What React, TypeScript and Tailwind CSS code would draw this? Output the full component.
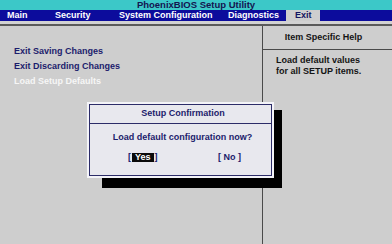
import React from "react";

const F = { fontFamily: '"Liberation Sans", Arial, sans-serif' };

export default function App() {
  return (
    <div
      className="relative w-[392px] h-[244px] overflow-hidden bg-[#cecece] font-bold text-[9px]"
      style={F}
    >
      {/* Title bar */}
      <div className="h-[10px] bg-[#3cc8c8] text-[#141450] text-center leading-[9px] text-[9.5px]">
        PhoenixBIOS Setup Utility
      </div>
      {/* Menu bar */}
      <div className="h-[11px] bg-[#0c0c9c] flex pl-[7px] text-white text-[9px] leading-[11px]">
        <div className="w-[48px]">Main</div>
        <div className="w-[64px]">Security</div>
        <div className="w-[109px]">System Configuration</div>
        <div className="w-[58px]">Diagnostics</div>
        <div className="w-[34px] pl-[9px] bg-[#cecece] text-[#141460]">Exit</div>
      </div>
      {/* Gap under menu */}
      <div className="h-[3px] bg-[#d2d2d2]" />
      <div className="h-[2px] bg-[#5a5a5a]" />
      {/* Body */}
      <div className="flex h-[218px]">
        <div className="w-[262px] pt-[18px] pl-[14px] leading-[15px] text-[#1c1c6c]">
          <div>Exit Saving Changes</div>
          <div>Exit Discarding Changes</div>
          <div className="text-[#f6f6f6]">Load Setup Defaults</div>
        </div>
        <div className="w-[1px] bg-[#4a4a4a]" />
        <div className="flex-1 flex flex-col text-[#141414]">
          <div className="h-[24px] border-b border-[#4a4a4a] text-center pr-[8px] leading-[23px]">
            Item Specific Help
          </div>
          <div className="pl-[13px] pt-[5px] leading-[10.5px]">
            <div>Load default values</div>
            <div>for all SETUP items.</div>
          </div>
        </div>
      </div>

      {/* Dialog shadow */}
      <div className="absolute left-[102px] top-[110px] w-[180px] h-[78px] bg-black" />
      {/* Dialog */}
      <div className="absolute left-[87px] top-[102px] w-[187px] h-[76px] bg-[#f4f4f8] p-[2px]">
        <div className="h-full border border-[#2c2c68] bg-[#e8e8ee] text-[#1c1c6c] flex flex-col">
          <div className="h-[19px] leading-[17px] text-center pl-[5px] border-b border-[#2c2c68]">
            Setup Confirmation
          </div>
          <div className="pt-[6px] leading-[15px] text-center pl-[4px]">
            Load default configuration now?
          </div>
          <div className="mt-[5px] flex leading-[15px]">
            <div className="ml-[38px] w-[90px] flex items-center">
              <span>[</span>
              <span className="bg-[#0a0a0a] text-white px-[3px] leading-[9px] h-[9px] mx-[1px]">Yes</span>
              <span>]</span>
            </div>
            <div className="whitespace-pre">[ No ]</div>
          </div>
        </div>
      </div>
    </div>
  );
}
